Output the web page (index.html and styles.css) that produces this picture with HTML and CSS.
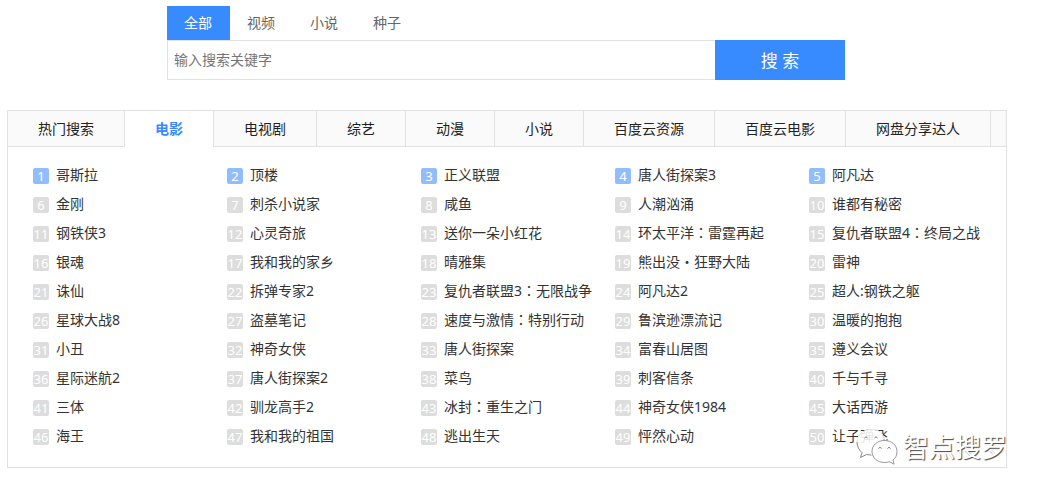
FILE: index.html
```html
<!DOCTYPE html>
<html lang="zh-CN">
<head>
<meta charset="utf-8">
<title>搜索</title>
<link rel="stylesheet" href="styles.css">
</head>
<body>
<main class="page">
  <form class="search">
    <nav class="types">
      <a class="type type-active" href="#">全部</a>
      <a class="type" href="#">视频</a>
      <a class="type" href="#">小说</a>
      <a class="type" href="#">种子</a>
    </nav>
    <div class="search-row">
      <input class="search-input" type="text" aria-label="输入搜索关键字" placeholder="输入搜索关键字">
      <button class="search-button" type="button">搜 索</button>
    </div>
  </form>

  <section class="panel">
    <nav class="tabs">
      <a class="tab" href="#">热门搜索</a>
      <a class="tab tab-active" href="#">电影</a>
      <a class="tab" href="#">电视剧</a>
      <a class="tab" href="#">综艺</a>
      <a class="tab" href="#">动漫</a>
      <a class="tab" href="#">小说</a>
      <a class="tab" href="#">百度云资源</a>
      <a class="tab" href="#">百度云电影</a>
      <a class="tab" href="#">网盘分享达人</a>
    </nav>
    <ol class="ranking">
      <li class="item"><span class="rank rank-top">1</span><a class="title" href="#">哥斯拉</a></li>
      <li class="item"><span class="rank rank-top">2</span><a class="title" href="#">顶楼</a></li>
      <li class="item"><span class="rank rank-top">3</span><a class="title" href="#">正义联盟</a></li>
      <li class="item"><span class="rank rank-top">4</span><a class="title" href="#">唐人街探案3</a></li>
      <li class="item"><span class="rank rank-top">5</span><a class="title" href="#">阿凡达</a></li>
      <li class="item"><span class="rank">6</span><a class="title" href="#">金刚</a></li>
      <li class="item"><span class="rank">7</span><a class="title" href="#">刺杀小说家</a></li>
      <li class="item"><span class="rank">8</span><a class="title" href="#">咸鱼</a></li>
      <li class="item"><span class="rank">9</span><a class="title" href="#">人潮汹涌</a></li>
      <li class="item"><span class="rank">10</span><a class="title" href="#">谁都有秘密</a></li>
      <li class="item"><span class="rank">11</span><a class="title" href="#">钢铁侠3</a></li>
      <li class="item"><span class="rank">12</span><a class="title" href="#">心灵奇旅</a></li>
      <li class="item"><span class="rank">13</span><a class="title" href="#">送你一朵小红花</a></li>
      <li class="item"><span class="rank">14</span><a class="title" href="#">环太平洋<span class="mark" lang="zh-TW">：</span>雷霆再起</a></li>
      <li class="item"><span class="rank">15</span><a class="title" href="#">复仇者联盟4<span class="mark" lang="zh-TW">：</span>终局之战</a></li>
      <li class="item"><span class="rank">16</span><a class="title" href="#">银魂</a></li>
      <li class="item"><span class="rank">17</span><a class="title" href="#">我和我的家乡</a></li>
      <li class="item"><span class="rank">18</span><a class="title" href="#">晴雅集</a></li>
      <li class="item"><span class="rank">19</span><a class="title" href="#">熊出没<span class="mark" lang="zh-TW">・</span>狂野大陆</a></li>
      <li class="item"><span class="rank">20</span><a class="title" href="#">雷神</a></li>
      <li class="item"><span class="rank">21</span><a class="title" href="#">诛仙</a></li>
      <li class="item"><span class="rank">22</span><a class="title" href="#">拆弹专家2</a></li>
      <li class="item"><span class="rank">23</span><a class="title" href="#">复仇者联盟3<span class="mark" lang="zh-TW">：</span>无限战争</a></li>
      <li class="item"><span class="rank">24</span><a class="title" href="#">阿凡达2</a></li>
      <li class="item"><span class="rank">25</span><a class="title" href="#">超人:钢铁之躯</a></li>
      <li class="item"><span class="rank">26</span><a class="title" href="#">星球大战8</a></li>
      <li class="item"><span class="rank">27</span><a class="title" href="#">盗墓笔记</a></li>
      <li class="item"><span class="rank">28</span><a class="title" href="#">速度与激情<span class="mark" lang="zh-TW">：</span>特别行动</a></li>
      <li class="item"><span class="rank">29</span><a class="title" href="#">鲁滨逊漂流记</a></li>
      <li class="item"><span class="rank">30</span><a class="title" href="#">温暖的抱抱</a></li>
      <li class="item"><span class="rank">31</span><a class="title" href="#">小丑</a></li>
      <li class="item"><span class="rank">32</span><a class="title" href="#">神奇女侠</a></li>
      <li class="item"><span class="rank">33</span><a class="title" href="#">唐人街探案</a></li>
      <li class="item"><span class="rank">34</span><a class="title" href="#">富春山居图</a></li>
      <li class="item"><span class="rank">35</span><a class="title" href="#">遵义会议</a></li>
      <li class="item"><span class="rank">36</span><a class="title" href="#">星际迷航2</a></li>
      <li class="item"><span class="rank">37</span><a class="title" href="#">唐人街探案2</a></li>
      <li class="item"><span class="rank">38</span><a class="title" href="#">菜鸟</a></li>
      <li class="item"><span class="rank">39</span><a class="title" href="#">刺客信条</a></li>
      <li class="item"><span class="rank">40</span><a class="title" href="#">千与千寻</a></li>
      <li class="item"><span class="rank">41</span><a class="title" href="#">三体</a></li>
      <li class="item"><span class="rank">42</span><a class="title" href="#">驯龙高手2</a></li>
      <li class="item"><span class="rank">43</span><a class="title" href="#">冰封<span class="mark" lang="zh-TW">：</span>重生之门</a></li>
      <li class="item"><span class="rank">44</span><a class="title" href="#">神奇女侠1984</a></li>
      <li class="item"><span class="rank">45</span><a class="title" href="#">大话西游</a></li>
      <li class="item"><span class="rank">46</span><a class="title" href="#">海王</a></li>
      <li class="item"><span class="rank">47</span><a class="title" href="#">我和我的祖国</a></li>
      <li class="item"><span class="rank">48</span><a class="title" href="#">逃出生天</a></li>
      <li class="item"><span class="rank">49</span><a class="title" href="#">怦然心动</a></li>
      <li class="item"><span class="rank">50</span><a class="title" href="#">让子弹飞</a></li>
    </ol>
    <div class="watermark">
      <svg class="watermark-icon" width="42" height="38" viewBox="0 0 42 38" aria-hidden="true">
        <path d="M15 1.500C7 1.500 1 7 1 14c0 4.500 2 8 5 10.500L4.500 29.500l6-3c2 .6 3 .8 5 .6C15 18 20 12 28.500 11.500 27 5 22 1.500 15 1.500z" fill="#fff" fill-opacity=".88"/>
        <path d="M1 14c0 4.500 2 8 5 10.500L4.500 29.500l6-3 5 .6" fill="none" stroke="#888"/>
        <path d="M1 14C1.500 7 7 1.500 15 1.500s12 3.500 13.500 10" fill="none" stroke="#e4e4e4"/>
        <path d="M28.500 12.500c-7 0-12.500 4.500-12.500 11s5.500 11 12.500 11c2 0 3.500-.3 5-.8l4.500 2.500-1-4.200c2.700-2 4-5 4-8.500 0-6.500-5.500-11-12.500-11z" fill="#fff" stroke="#999"/>
        <path d="M8.500 10q1.500-2.500 3 0M18.500 10q1.500-2.500 3 0M22.500 20.500q1.500-2.500 3 0M31.500 20.500q1.500-2.500 3 0" fill="none" stroke="#777"/>
      </svg>
      <span class="watermark-text">智点搜罗</span>
    </div>
  </section>
</main>
</body>
</html>
```
FILE: styles.css
```css
* {
  box-sizing: border-box;
}

body {
  margin: 0;
  background: #fff;
  color: #333;
  font-family: "Noto Sans", "Noto Sans CJK SC", sans-serif;
  font-size: 14px;
}

a {
  color: inherit;
  text-decoration: none;
}

.page {
  padding: 6px 34px 24px 7px;
}

.search {
  margin: 0 162px 30px 160px;
}

.types {
  display: flex;
}

.type {
  min-width: 63px;
  padding-right: 1px;
  color: #666;
  line-height: 34px;
  text-align: center;
}

.type-active {
  background: #388bff;
  color: #fff;
}

.search-row {
  display: flex;
  height: 40px;
}

.search-input {
  flex: 1;
  min-width: 0;
  padding: 0 6px 2px;
  border: 1px solid #e1e1e1;
  border-right: 0;
  color: #333;
  font: inherit;
}

.search-input::placeholder {
  color: #757575;
}

.search-button {
  width: 130px;
  padding: 0 0 2px;
  border: 0;
  background: #388bff;
  color: #fff;
  font: inherit;
  font-size: 17px;
}

.panel {
  position: relative;
  border: 1px solid #e1e1e1;
}

.tabs {
  display: flex;
  background: linear-gradient(#e1e1e1, #e1e1e1) bottom / 100% 1px no-repeat #fafafa;
}

.tab {
  padding: 0 30px 1px;
  border-right: 1px solid #e1e1e1;
  color: #222;
  line-height: 35px;
  white-space: nowrap;
}

.tab-active {
  background: #fff;
  color: #388bff;
  font-weight: 700;
}

.ranking {
  display: grid;
  grid-template-columns: repeat(5, 1fr);
  margin: 0;
  padding: 14px 3px 16px 25px;
  list-style: none;
}

.item {
  display: flex;
  align-items: center;
  gap: 7px;
  height: 29px;
  white-space: nowrap;
}

.title {
  padding-bottom: 2px;
  line-height: 20px;
}

.rank {
  width: 16px;
  border-radius: 2px;
  background: #ddd;
  color: #fff;
  font-size: 13px;
  line-height: 16px;
  text-align: center;
}

.rank-top {
  background: #91bdff;
}

.mark {
  font-family: "Noto Sans CJK TC", sans-serif;
  line-height: 1;
}

.watermark {
  position: absolute;
  right: -1px;
  bottom: 1px;
  display: flex;
  align-items: center;
  gap: 5px;
}

.watermark-text {
  color: #fff;
  font-size: 26px;
  line-height: 38px;
  text-shadow: 1px 1px 1px #444;
}
```
